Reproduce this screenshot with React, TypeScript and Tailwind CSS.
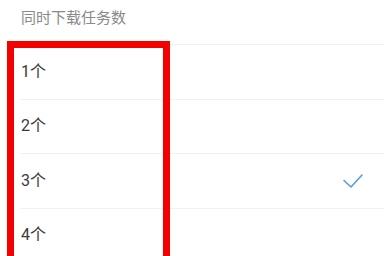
import { useState } from "react";

const options = [1, 2, 3, 4];

export default function App() {
  const [selected, setSelected] = useState(3);

  return (
    <div
      className="relative h-[256px] w-[384px] overflow-hidden bg-white"
      style={{ fontFamily: 'Roboto, "Noto Sans CJK SC", sans-serif' }}
    >
      <div className="flex h-[44px] items-start pl-[21px] pt-[7px] text-[15px] leading-[22px] text-[#8a8a8a]">
        同时下载任务数
      </div>

      <div className="ml-[20px]">
        {options.map((n) => (
          <button
            key={n}
            onClick={() => setSelected(n)}
            className="flex h-[54.5px] w-full items-center justify-between border-t border-[#f1f1f1] pr-[20px] text-left text-[16px] text-[#3a3a3a]"
          >
            <span className="pl-[1px]">{n}个</span>
            {selected === n && (
              <svg
                width="22"
                height="18"
                viewBox="0 0 22 18"
                fill="none"
                stroke="#5b9bd9"
                strokeWidth="1.6"
                strokeLinecap="round"
                strokeLinejoin="round"
              >
                <path d="M2 8.5 L9 15 L20 3" />
              </svg>
            )}
          </button>
        ))}
      </div>

      {/* annotation frame */}
      <div className="pointer-events-none absolute left-[7px] top-[41px] h-[240px] w-[163px] border-[7px] border-[#f40000]" />
    </div>
  );
}
